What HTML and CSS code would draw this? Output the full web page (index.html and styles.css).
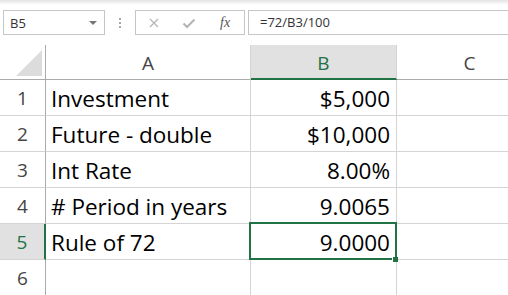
FILE: index.html
```html
<!DOCTYPE html>
<html lang="en">
  <head>
    <meta charset="UTF-8" />
    <meta name="viewport" content="width=device-width, initial-scale=1.0" />
    <title>Rule of 72</title>
    <link rel="stylesheet" href="styles.css">
  </head>

  <body>
    <div class="formula-bar">
      <div class="name-box">
        <span>B5</span>
        <span class="name-arrow"></span>
      </div>
      <div class="grip">
        <span></span><span></span><span></span>
      </div>
      <div class="fx-box">
        <svg class="fx-icon" width="12" height="12" viewBox="0 0 12 12">
          <path d="M2 2 L10 10 M10 2 L2 10" stroke="#b4b4b4" stroke-width="1.2" fill="none" />
        </svg>
        <svg class="fx-icon" width="14" height="12" viewBox="0 0 14 12">
          <path d="M1.5 6.5 L5 10 L12.5 2.5" stroke="#b4b4b4" stroke-width="2" fill="none" />
        </svg>
        <span class="fx-label">fx</span>
      </div>
      <div class="formula-input">=72/B3/100</div>
    </div>

    <div class="sheet">
      <div class="corner"><span class="corner-tri"></span></div>
      <div class="col-head">A</div>
      <div class="col-head active">B</div>
      <div class="col-head">C</div>

      <div class="row-head">1</div>
      <div class="cell">Investment</div>
      <div class="cell num">$5,000</div>
      <div class="cell"></div>

      <div class="row-head">2</div>
      <div class="cell">Future - double</div>
      <div class="cell num">$10,000</div>
      <div class="cell"></div>

      <div class="row-head">3</div>
      <div class="cell">Int Rate</div>
      <div class="cell num">8.00%</div>
      <div class="cell"></div>

      <div class="row-head">4</div>
      <div class="cell"># Period in years</div>
      <div class="cell num">9.0065</div>
      <div class="cell"></div>

      <div class="row-head active">5</div>
      <div class="cell">Rule of 72</div>
      <div class="cell num selected">9.0000<span class="fill-handle"></span></div>
      <div class="cell"></div>

      <div class="row-head">6</div>
      <div class="cell"></div>
      <div class="cell"></div>
      <div class="cell"></div>
    </div>
  </body>
</html>
```

FILE: styles.css
```css
body {
  margin: 0;
  width: 508px;
  height: 295px;
  overflow: hidden;
  background: #fff;
  font-family: "Open Sans", "Noto Sans", sans-serif;
}

/* formula bar */
.formula-bar {
  height: 45px;
  box-sizing: border-box;
  padding-top: 10px;
  display: flex;
  align-items: flex-start;
  background: linear-gradient(#e4e4e4 0, #fff 5px);
}

.name-box {
  margin-left: 3px;
  width: 102px;
  height: 25px;
  box-sizing: border-box;
  border: 1px solid #c6c6c6;
  background: #fff;
  display: flex;
  align-items: center;
  justify-content: space-between;
  padding: 0 7px 0 6px;
  font-size: 13px;
  color: #333;
}

.name-arrow {
  width: 0;
  height: 0;
  border-left: 4px solid transparent;
  border-right: 4px solid transparent;
  border-top: 4px solid #777;
}

.grip {
  width: 30px;
  height: 25px;
  display: flex;
  flex-direction: column;
  align-items: center;
  justify-content: center;
  gap: 2px;
}

.grip span {
  width: 2px;
  height: 2px;
  background: #a6a6a6;
}

.fx-box {
  width: 110px;
  height: 25px;
  box-sizing: border-box;
  border: 1px solid #c6c6c6;
  display: flex;
  align-items: center;
  padding-left: 12px;
  gap: 22px;
}

.fx-label {
  font-family: "Liberation Serif", serif;
  font-style: italic;
  font-size: 14px;
  color: #555;
  margin-left: 2px;
}

.formula-input {
  margin-left: 3px;
  flex: 1;
  height: 25px;
  box-sizing: border-box;
  border: 1px solid #c6c6c6;
  border-right: none;
  padding-left: 11px;
  font-size: 13px;
  line-height: 23px;
  color: #333;
}

/* grid */
.sheet {
  display: grid;
  grid-template-columns: 46px 205px 146px 146px;
  grid-template-rows: 35px repeat(6, 36px);
  width: 508px;
  overflow: hidden;
}

.corner,
.col-head,
.row-head,
.cell {
  box-sizing: border-box;
  border-right: 1px solid #d4d4d4;
  border-bottom: 1px solid #d4d4d4;
  white-space: nowrap;
}

.corner {
  border-right-color: #ababab;
  border-bottom-color: #ababab;
  position: relative;
}

.corner-tri {
  position: absolute;
  right: 3px;
  bottom: 3px;
  width: 0;
  height: 0;
  border-left: 26px solid transparent;
  border-bottom: 26px solid #dcdcdc;
}

.col-head {
  border-bottom-color: #ababab;
  text-align: center;
  font-size: 19px;
  line-height: 31px;
  padding-top: 3px;
  color: #444;
}

.col-head.active {
  background: #e1e1e1;
  color: #217346;
  border-bottom: 2px solid #217346;
}

.row-head {
  border-right-color: #ababab;
  text-align: center;
  font-size: 19px;
  line-height: 33px;
  padding-top: 2px;
  color: #444;
}

.row-head.active {
  background: #e1e1e1;
  color: #217346;
  border-right: 2px solid #217346;
}

.cell {
  font-size: 22.5px;
  line-height: 33px;
  padding: 2px 6px 0 5px;
  color: #000;
}

.cell.num {
  text-align: right;
}

.cell.selected {
  position: relative;
}

.cell.selected::before {
  content: "";
  position: absolute;
  left: -2px;
  top: -2px;
  right: -1px;
  bottom: -1px;
  border: 2px solid #217346;
}

.fill-handle {
  position: absolute;
  right: -2px;
  bottom: -3px;
  width: 5px;
  height: 5px;
  background: #217346;
  border: 1px solid #fff;
  border-width: 0 0 0 1px;
}
```
